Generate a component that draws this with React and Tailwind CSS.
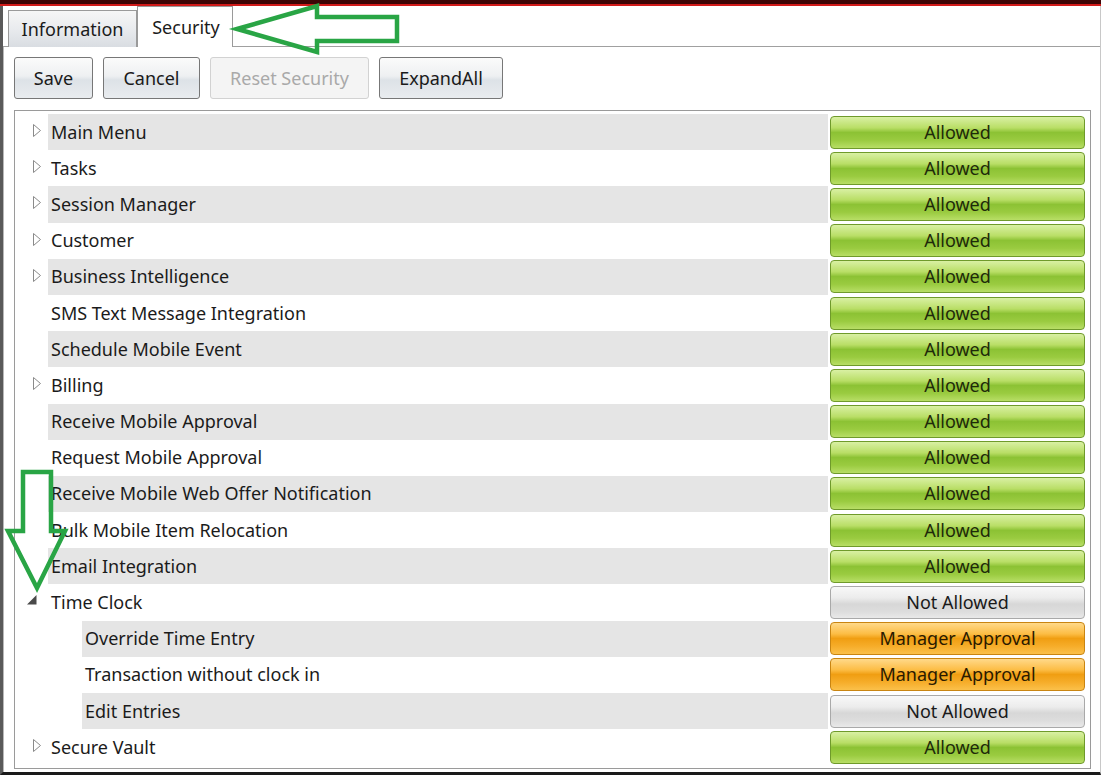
import React from 'react';

const rows = [
  { label: 'Main Menu', status: 'allowed', expander: 'closed' },
  { label: 'Tasks', status: 'allowed', expander: 'closed' },
  { label: 'Session Manager', status: 'allowed', expander: 'closed' },
  { label: 'Customer', status: 'allowed', expander: 'closed' },
  { label: 'Business Intelligence', status: 'allowed', expander: 'closed' },
  { label: 'SMS Text Message Integration', status: 'allowed' },
  { label: 'Schedule Mobile Event', status: 'allowed' },
  { label: 'Billing', status: 'allowed', expander: 'closed' },
  { label: 'Receive Mobile Approval', status: 'allowed' },
  { label: 'Request Mobile Approval', status: 'allowed' },
  { label: 'Receive Mobile Web Offer Notification', status: 'allowed' },
  { label: 'Bulk Mobile Item Relocation', status: 'allowed' },
  { label: 'Email Integration', status: 'allowed' },
  { label: 'Time Clock', status: 'denied', expander: 'open' },
  { label: 'Override Time Entry', status: 'manager', child: true },
  { label: 'Transaction without clock in', status: 'manager', child: true },
  { label: 'Edit Entries', status: 'denied', child: true },
  { label: 'Secure Vault', status: 'allowed', expander: 'closed' },
];

const statusStyles = {
  allowed: {
    text: 'Allowed',
    cls: 'border-[#6f9a2b] bg-[linear-gradient(to_bottom,#d9f0a3_0%,#b9de66_35%,#8cc234_50%,#9acb40_75%,#b8de66_100%)] text-[#1f2a0a]',
  },
  manager: {
    text: 'Manager Approval',
    cls: 'border-[#c98512] bg-[linear-gradient(to_bottom,#ffd98a_0%,#fcbd45_35%,#f09e12_50%,#f6ad2a_75%,#fbc04a_100%)] text-[#2a1a00]',
  },
  denied: {
    text: 'Not Allowed',
    cls: 'border-[#a9a9a9] bg-[linear-gradient(to_bottom,#f8f8f8_0%,#ececec_35%,#d7d7d7_55%,#dddddd_80%,#e9e9e9_100%)] text-[#1a1a1a]',
  },
};

function Expander({ kind }) {
  if (kind === 'closed') {
    return (
      <svg width="10" height="15" viewBox="0 0 10 15" className="mb-[3px] ml-[9px]">
        <path d="M1.5 1.5 L8.5 7.5 L1.5 13.5 Z" fill="white" stroke="#8a8a8a" strokeWidth="1" />
      </svg>
    );
  }
  if (kind === 'open') {
    return (
      <svg width="12" height="12" viewBox="0 0 12 12" className="mb-[5px] ml-[3px]">
        <path d="M10.5 1 L10.5 10.5 L1 10.5 Z" fill="#4a4a4a" />
      </svg>
    );
  }
  return null;
}

function Row({ row, index }) {
  const st = statusStyles[row.status];
  const shaded = index % 2 === 0;
  return (
    <div className="flex h-[36.2px] items-center">
      <div className="flex h-full w-[33px] shrink-0 items-center pl-[8px]">
        <Expander kind={row.expander} />
      </div>
      {row.child && <div className="w-[34px] shrink-0" />}
      <div className={`flex h-full flex-1 items-center pl-[3px] ${shaded ? 'bg-[#e5e5e5]' : ''}`}>
        {row.label}
      </div>
      <div className="ml-[2px] flex h-full w-[255px] shrink-0 items-center">
        <div className={`flex h-[33px] w-full items-center justify-center rounded-[4px] border ${st.cls}`}>
          {st.text}
        </div>
      </div>
      <div className="w-[5px] shrink-0" />
    </div>
  );
}

function ToolButton({ children, width, disabled }) {
  return (
    <div
      className={`flex h-[42px] items-center justify-center rounded-[3px] border ${width} ${
        disabled
          ? 'border-[#d2d2d2] bg-[#f4f4f4] text-[#a9a9a9]'
          : 'border-[#777] bg-[linear-gradient(to_bottom,#fbfbfb_0%,#eef0f2_45%,#dde2e7_55%,#e9ecef_100%)] text-[#1a1a1a]'
      }`}
    >
      {children}
    </div>
  );
}

export default function App() {
  return (
    <div
      className="relative h-[775px] w-[1101px] overflow-hidden bg-white text-[18px] text-[#1b1b1b]"
      style={{ fontFamily: '"Noto Sans", "Open Sans", sans-serif' }}
    >
      <div className="h-[4px] bg-[#3d0505]" />
      <div className="h-[2px] bg-[#d11a1a]" />
      <div className="flex h-[769px] flex-col border-b-[3px] border-l-[3px] border-r border-b-[#1a1a1a] border-l-[#5a5a5a] border-r-[#c8c8c8]">
        {/* tabs */}
        <div className="flex h-[41px] items-end border-b border-[#a0a0a0] pl-[5px]">
          <div className="-mb-px flex h-[37px] w-[129px] items-center justify-center border border-b-0 border-[#9a9a9a] bg-[linear-gradient(to_bottom,#f6f6f6_0%,#e9ebee_50%,#d9dde2_100%)] leading-none">
            Information
          </div>
          <div className="-mb-px flex h-[41px] w-[96px] items-center justify-center border border-b-0 border-[#9a9a9a] bg-white pl-[2px] leading-none">
            Security
          </div>
        </div>
        {/* panel */}
        <div className="flex flex-1 flex-col border-l border-[#b8b8b8] pb-[3px] pl-[10px] pr-[9px] pt-[10px]">
          <div className="flex gap-[10px]">
            <ToolButton width="w-[79px]">Save</ToolButton>
            <ToolButton width="w-[97px]">Cancel</ToolButton>
            <ToolButton width="w-[159px]" disabled>
              Reset Security
            </ToolButton>
            <ToolButton width="w-[124px]">ExpandAll</ToolButton>
          </div>
          <div className="mt-[11px] flex-1 border border-[#9a9a9a] pt-[3px]">
            {rows.map((r, i) => (
              <Row key={r.label} row={r} index={i} />
            ))}
          </div>
        </div>
      </div>

      {/* annotation arrows */}
      <svg className="absolute left-0 top-0" width="1101" height="775" viewBox="0 0 1101 775" fill="none">
        <path
          d="M237 29 L317 6 L317 17 L397 17 L397 41 L317 41 L317 52 Z"
          stroke="#29a545"
          strokeWidth="4.5"
          strokeLinejoin="miter"
        />
        <path
          d="M23 472 L51 472 L51 531 L65 531 L37 588 L8 531 L23 531 Z"
          stroke="#29a545"
          strokeWidth="4.5"
          strokeLinejoin="miter"
        />
      </svg>
    </div>
  );
}
